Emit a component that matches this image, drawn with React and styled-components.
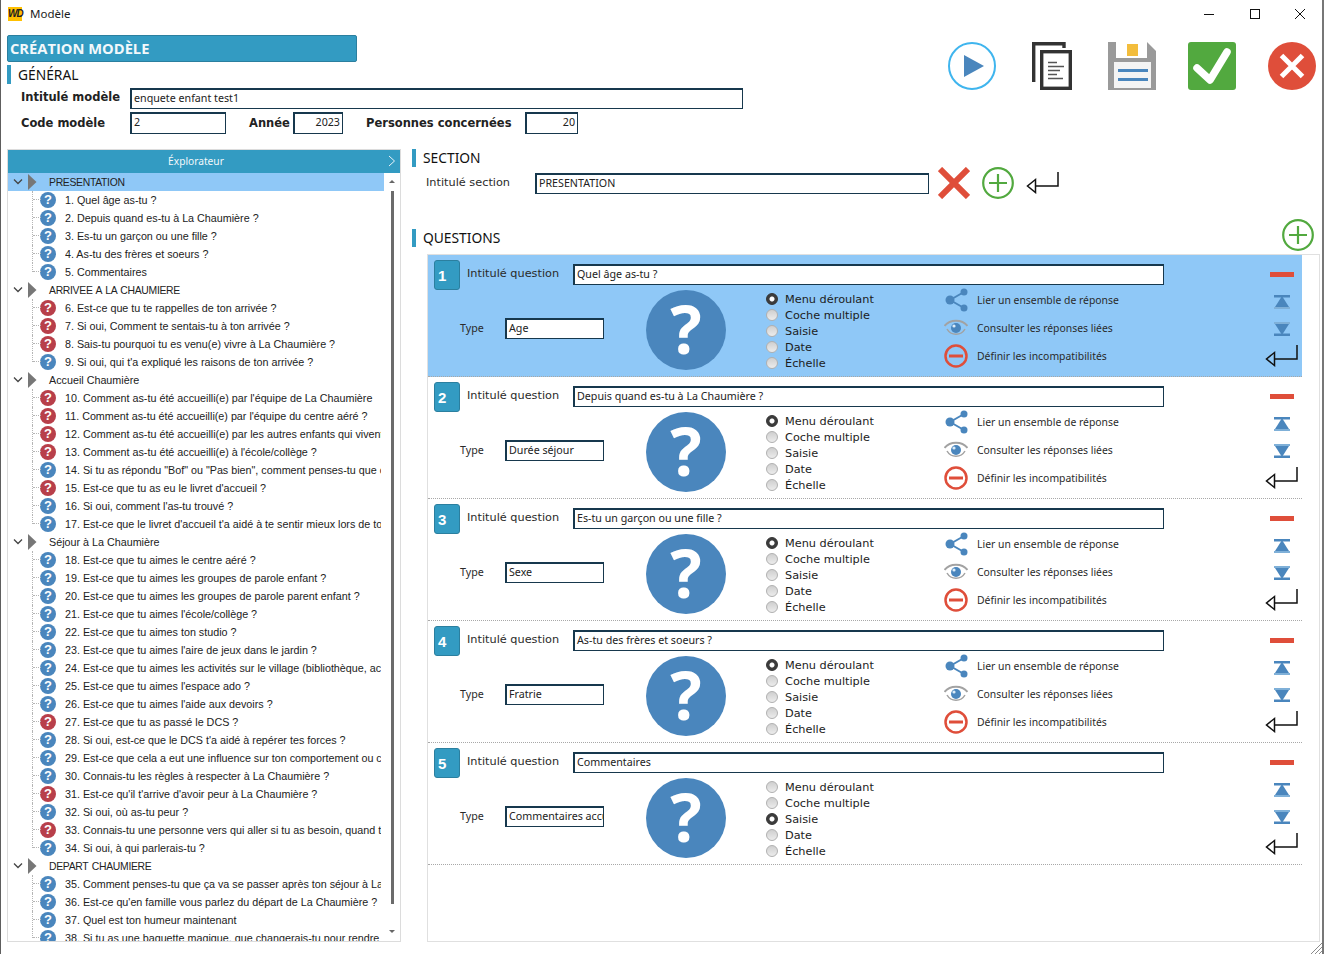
import React from 'react';
import styled, { createGlobalStyle } from 'styled-components';

const BLUE = '#339bc2';
const SKY = '#8fc8f7';
const STEEL = '#4a86bd';
const RED = '#df4e3a';
const GREEN = '#52a93f';
const LINE = '#17384d';

const GlobalStyle = createGlobalStyle`
  * { box-sizing: border-box; }
  html, body { margin: 0; padding: 0; background: #fff; }
  body { font-family: "Noto Sans", "Liberation Sans", sans-serif; color: #1c1c1c; }
`;

const Window = styled.div`
  position: relative;
  width: 1324px;
  height: 954px;
  overflow: hidden;
  background: #fff;
  border-left: 1px solid #5e5e5e;
  border-right: 2px solid #777;
`;

const TitleBar = styled.div`
  display: flex;
  align-items: center;
  height: 28px;
  padding-left: 7px;
`;

const AppLogo = styled.span`
  width: 14px;
  height: 14px;
  background: #ffc000;
  color: #222;
  font: italic bold 10px/14px "Liberation Sans", sans-serif;
  letter-spacing: -1px;
  text-align: center;
`;

const AppName = styled.span`
  margin: 0 0 2px 8px;
  font-size: 11.5px;
  flex: 1;
`;

const WinButton = styled.span`
  display: flex;
  align-items: center;
  justify-content: center;
  width: ${(p) => p.$w}px;
  height: 28px;
`;

const Header = styled.header`
  display: flex;
  justify-content: space-between;
  height: 121px;
`;

const General = styled.div`
  padding: 7px 0 0 6px;
`;

const Banner = styled.h1`
  width: 350px;
  height: 27px;
  margin: 0;
  padding-left: 2px;
  background: ${BLUE};
  border: 1px solid #2b7f9f;
  border-radius: 2px;
  color: #f2f8fb;
  font: bold 14.7px/25px "Open Sans", sans-serif;
`;

const SectionTitle = styled.h2`
  height: 18px;
  margin: 0;
  padding-left: 7px;
  border-left: 4px solid ${BLUE};
  font-weight: 400;
  font-size: 13.8px;
  line-height: 17px;
  color: #111;
`;

const GeneralHead = styled(SectionTitle)`
  height: 19px;
  margin-top: 3px;
  line-height: 20px;
`;

const FieldRow = styled.div`
  display: flex;
  align-items: center;
  height: ${(p) => p.$h}px;
  margin-top: ${(p) => p.$top}px;
`;

const BoldLabel = styled.label`
  width: ${(p) => p.$w}px;
  margin-left: ${(p) => p.$left || 0}px;
  margin-bottom: ${(p) => p.$lift || 0}px;
  font: bold 11.5px "DejaVu Sans", sans-serif;
  color: #222;
  white-space: nowrap;
`;

const Field = styled.div`
  width: ${(p) => p.$w}px;
  height: ${(p) => p.$h || 21}px;
  padding: 0 2px;
  flex: none;
  background: #fff;
  border: 1px solid ${LINE};
  border-top-width: 2px;
  border-left-width: 2px;
  font-size: 10.7px;
  line-height: 16px;
  color: #222;
  text-align: ${(p) => (p.$right ? 'right' : 'left')};
  white-space: nowrap;
  overflow: hidden;
`;

const Toolbar = styled.div`
  display: flex;
  gap: 32px;
  padding: 14px 6px 0 0;
  align-items: flex-start;
`;

const CopySlot = styled.span`
  display: flex;
  margin: 0 4px;
`;

const Main = styled.main`
  display: flex;
  align-items: flex-start;
  height: 793px;
  padding-left: 6px;
`;

const Explorer = styled.aside`
  width: 394px;
  height: 793px;
  display: flex;
  flex-direction: column;
  border: 1px solid #dcdcdc;
`;

const ExplorerHead = styled.div`
  position: relative;
  flex: none;
  height: 23px;
  padding-right: 16px;
  background: ${BLUE};
  color: #f2f8fb;
  font-size: 10.2px;
  line-height: 23px;
  text-align: center;
`;

const HeadChevron = styled.span`
  position: absolute;
  right: 4px;
  top: 5px;
  display: flex;
`;

const ExplorerBody = styled.div`
  flex: 1;
  display: flex;
  min-height: 0;
`;

const Tree = styled.div`
  width: 376px;
  overflow: hidden;
`;

const GroupRow = styled.div`
  display: flex;
  align-items: center;
  height: 18px;
  padding-left: 5px;
  background: ${(p) => (p.$selected ? SKY : 'transparent')};
  color: #222;
  white-space: nowrap;
`;

const GroupName = styled.span`
  margin-left: 12px;
  font: ${(p) => (p.$caps ? 10.4 : 10.75)}px "Liberation Sans", sans-serif;
  letter-spacing: ${(p) => (p.$caps ? -0.3 : 0)}px;
  word-spacing: ${(p) => (p.$caps ? 1 : 0)}px;
`;

const QuestionRow = styled.div`
  display: flex;
  align-items: center;
  height: 18px;
  padding-right: 3px;
  font: 10.75px "Liberation Sans", sans-serif;
  color: #222;
`;

const Connector = styled.span`
  position: relative;
  flex: none;
  align-self: flex-start;
  width: 8px;
  height: ${(p) => (p.$last ? 9 : 18)}px;
  margin-left: 24px;
  border-left: 1px dotted #b5b5b5;
  &::after {
    content: '';
    position: absolute;
    left: 0;
    top: 8px;
    width: 8px;
    border-top: 1px dotted #b5b5b5;
  }
`;

const QuestionMark = styled.span`
  flex: none;
  width: 16px;
  height: 16px;
  border-radius: 50%;
  background: ${(p) => (p.$red ? '#b83f4a' : STEEL)};
  color: #fff;
  font: bold 13px/16px "Liberation Sans", sans-serif;
  text-align: center;
`;

const QuestionText = styled.span`
  flex: 1;
  min-width: 0;
  margin-left: 9px;
  overflow: hidden;
  white-space: nowrap;
`;

const ScrollTrack = styled.div`
  flex: 1;
  display: flex;
  flex-direction: column;
  align-items: center;
`;

const ScrollArrow = styled.span`
  flex: none;
  width: 0;
  height: 0;
  margin-top: ${(p) => p.$top}px;
  border-left: 3px solid transparent;
  border-right: 3px solid transparent;
  border-${(p) => (p.$down ? 'top' : 'bottom')}: 3px solid #666;
`;

const ScrollThumb = styled.span`
  flex: none;
  width: 3px;
  height: 713px;
  margin-top: 8px;
  background: #6b6b6b;
`;

const Editor = styled.section`
  width: 908px;
  margin-left: 11px;
  display: flex;
  flex-direction: column;
  height: 793px;
`;

const SectionRow = styled.div`
  display: flex;
  align-items: center;
  height: 32px;
`;

const PlainLabel = styled.label`
  font: 11.3px "DejaVu Sans", sans-serif;
  color: #2a2a2a;
  white-space: nowrap;
`;

const SectionLabel = styled(PlainLabel)`
  width: 109px;
  margin: 0 0 2px 14px;
`;

const SectionTools = styled.div`
  display: flex;
  align-items: center;
  gap: 12px;
  margin-left: 9px;
`;

const QuestionsHead = styled.div`
  display: flex;
  justify-content: space-between;
  flex: none;
  height: 35px;
  margin-top: 20px;
  padding-right: 6px;
`;

const QuestionsTitle = styled(SectionTitle)`
  margin-top: 10px;
`;

const QuestionList = styled.div`
  flex: 1;
  margin-left: 15px;
  border: 1px solid #e0e0e0;
`;

const Card = styled.article`
  width: 874px;
  height: 122px;
  background: ${(p) => (p.$active ? SKY : '#fff')};
  border-bottom: 1px dotted #a8a8a8;
`;

const CardTop = styled.div`
  display: flex;
  align-items: flex-start;
  height: 33px;
  padding-left: 6px;
`;

const Badge = styled.span`
  flex: none;
  width: 26px;
  height: 30px;
  margin-top: 5px;
  padding-left: 3px;
  background: ${BLUE};
  border: 1px solid #2b7f9f;
  border-radius: 3px;
  color: #fff;
  font: bold 15px/29px "Liberation Sans", sans-serif;
`;

const QuestionLabel = styled(PlainLabel)`
  width: 106px;
  margin: 10px 0 0 7px;
  line-height: 18px;
`;

const TitleField = styled(Field)`
  margin-top: 9px;
`;

const RemoveBar = styled.span`
  flex: none;
  width: 24px;
  height: 5px;
  margin: 17px 0 0 106px;
  background: ${RED};
`;

const CardBottom = styled.div`
  display: flex;
  align-items: flex-start;
  padding-left: 32px;
`;

const TypeGroup = styled.div`
  display: flex;
  align-items: center;
  width: 186px;
  margin-top: 30px;
`;

const TypeLabel = styled.label`
  width: 45px;
  margin-bottom: 2px;
  font-size: 10.7px;
  color: #2a2a2a;
`;

const BigMark = styled.span`
  flex: none;
  width: 80px;
  height: 80px;
  margin-top: 2px;
  border-radius: 50%;
  background: ${STEEL};
  color: #fff;
  font: bold 66px/76px "Open Sans", sans-serif;
  text-align: center;
`;

const RadioColumn = styled.div`
  flex: none;
  width: 178px;
  margin: 3px 0 0 40px;
`;

const RadioRow = styled.div`
  display: flex;
  align-items: center;
  height: 16px;
  font: 11.3px "DejaVu Sans", sans-serif;
  color: #1c1c1c;
`;

const RadioDot = styled.span`
  flex: none;
  width: 12px;
  height: 12px;
  margin-right: 7px;
  border-radius: 50%;
  background: ${(p) => (p.$on ? 'radial-gradient(circle, #fff 0 2px, #3c3c3c 3px)' : 'linear-gradient(#cfcfcf, #ececec)')};
  border: 1px solid ${(p) => (p.$on ? '#333' : '#b0b0b0')};
`;

const ActionColumn = styled.div`
  flex: none;
  width: 321px;
  display: flex;
  flex-direction: column;
  gap: 4px;
`;

const ActionRow = styled.div`
  display: flex;
  align-items: center;
  height: 24px;
  font-size: 10.4px;
  color: #2a2a2a;
  white-space: nowrap;
`;

const ActionIcon = styled.span`
  display: flex;
  justify-content: center;
  width: 24px;
  margin-right: 9px;
`;

const MoveColumn = styled.div`
  flex: none;
  width: 33px;
  display: flex;
  flex-direction: column;
  align-items: center;
  padding-top: 7px;
`;

const MoveDownIcon = styled.span`
  display: flex;
  margin: 13px 0 9px;
`;

const Grip = styled.svg`
  position: absolute;
  right: 0;
  bottom: 0;
`;

const PlayIcon = () => (
  <svg width="48" height="48" viewBox="0 0 48 48">
    <circle cx="24" cy="24" r="23" fill="#fff" stroke="#3fb5ee" strokeWidth="2" />
    <path d="M16 13 36 24 16 35z" fill={STEEL} />
  </svg>
);

const CopyIcon = () => (
  <svg width="40" height="48" viewBox="0 0 40 48">
    <path d="M1.700 40V1.700H32V6" fill="none" stroke="#333" strokeWidth="3.400" />
    <rect x="9.700" y="9.700" width="28.600" height="36.600" fill="#fff" stroke="#333" strokeWidth="3.400" />
    <path d="M16 20.500h9M16 24.500h16M16 28.500h12M16 32.500h9M16 36.500h15" stroke="#555" strokeWidth="1.500" />
  </svg>
);

const SaveIcon = () => (
  <svg width="48" height="48" viewBox="0 0 48 48">
    <path d="M0 0H39L48 9V48H0z" fill="#9a9a9a" />
    <path d="M8 0H39V16H8z" fill="#fff" />
    <rect x="19" y="2" width="11" height="12" fill="#f3bd3c" />
    <rect x="6" y="20" width="37" height="26" fill="#f4f4f4" />
    <rect x="10" y="27" width="30" height="3" fill={STEEL} />
    <rect x="10" y="36" width="30" height="3" fill={STEEL} />
  </svg>
);

const CheckIcon = () => (
  <svg width="48" height="48" viewBox="0 0 48 48">
    <rect width="48" height="48" rx="3" fill={GREEN} />
    <path d="M9 26 22 38 39 10" fill="none" stroke="#fff" strokeWidth="7.500" strokeLinecap="round" strokeLinejoin="round" />
  </svg>
);

const CloseIcon = () => (
  <svg width="48" height="48" viewBox="0 0 48 48">
    <circle cx="24" cy="24" r="24" fill={RED} />
    <path d="M13.500 13.500 34.500 34.500M34.500 13.500 13.500 34.500" stroke="#fff" strokeWidth="5" />
  </svg>
);

const MinIcon = () => (
  <svg width="10" height="10" viewBox="0 0 10 10"><path d="M0 5.500h10" stroke="#111" /></svg>
);
const MaxIcon = () => (
  <svg width="10" height="10" viewBox="0 0 10 10"><rect x=".5" y=".5" width="9" height="9" fill="none" stroke="#111" /></svg>
);
const ShutIcon = () => (
  <svg width="10" height="10" viewBox="0 0 10 10"><path d="M0 0 10 10M10 0 0 10" stroke="#111" /></svg>
);

const BigX = () => (
  <svg width="32" height="32" viewBox="0 0 32 32">
    <path d="M2 2 30 30M30 2 2 30" stroke={RED} strokeWidth="6" />
  </svg>
);

const PlusIcon = () => (
  <svg width="32" height="32" viewBox="0 0 32 32">
    <circle cx="16" cy="16" r="14.800" fill="none" stroke={GREEN} strokeWidth="2.200" />
    <path d="M16 7V25M7 16H25" stroke={GREEN} strokeWidth="2.200" />
  </svg>
);

const ReturnIcon = () => (
  <svg width="33" height="22" viewBox="0 0 33 22">
    <path d="M32 0V14H9.500M9.500 7.500 1.500 14 9.500 20.500z" fill="none" stroke="#111" strokeWidth="1.500" />
  </svg>
);

const ShareIcon = () => (
  <svg width="24" height="24" viewBox="0 0 24 24">
    <path d="M6 12 20 4M6 12 20 20" stroke={STEEL} strokeWidth="2" />
    <circle cx="6" cy="12" r="4.500" fill={STEEL} />
    <circle cx="20" cy="4" r="3.500" fill={STEEL} />
    <circle cx="20" cy="20" r="3.500" fill={STEEL} />
  </svg>
);

const EyeIcon = () => (
  <svg width="24" height="24" viewBox="0 0 24 24">
    <path d="M0.500 10C6 3 18 3 23.500 10" fill="none" stroke="#a2a2a2" strokeWidth="2" />
    <path d="M3 13C7 20 17 20 21 13" fill="none" stroke="#a2a2a2" strokeWidth="1.500" />
    <circle cx="12" cy="12" r="5" fill={STEEL} />
    <circle cx="10" cy="10" r="1.600" fill="#dcecf8" />
  </svg>
);

const ForbidIcon = () => (
  <svg width="24" height="24" viewBox="0 0 24 24">
    <circle cx="12" cy="12" r="10.500" fill="none" stroke={RED} strokeWidth="2.500" />
    <rect x="5" y="10.500" width="14" height="3" fill={RED} />
  </svg>
);

const UpIcon = () => (
  <svg width="16" height="14" viewBox="0 0 16 14">
    <rect width="16" height="2.500" fill={STEEL} />
    <path d="M8 1 15 12H1z" fill={STEEL} />
    <rect y="12" width="16" height="2" fill="#7fb0d8" />
  </svg>
);

const DownIcon = () => (
  <svg width="16" height="14" viewBox="0 0 16 14">
    <rect width="16" height="2" fill="#7fb0d8" />
    <path d="M8 13 15 2H1z" fill={STEEL} />
    <rect y="11.500" width="16" height="2.500" fill={STEEL} />
  </svg>
);

const groups = [
  { name: 'PRESENTATION', selected: true, items: [
    ['1. Quel âge as-tu ?'],
    ['2. Depuis quand es-tu à La Chaumière ?'],
    ['3. Es-tu un garçon ou une fille ?'],
    ['4. As-tu des frères et soeurs ?'],
    ['5. Commentaires'],
  ] },
  { name: 'ARRIVEE A LA CHAUMIERE', items: [
    ['6. Est-ce que tu te rappelles de ton arrivée ?', 1],
    ['7. Si oui, Comment te sentais-tu à ton arrivée ?', 1],
    ['8. Sais-tu pourquoi tu es venu(e) vivre à La Chaumière ?', 1],
    ['9. Si oui, qui t\'a expliqué les raisons de ton arrivée ?'],
  ] },
  { name: 'Accueil Chaumière', items: [
    ['10. Comment as-tu été accueilli(e) par l\'équipe de La Chaumière', 1],
    ['11. Comment as-tu été accueilli(e) par l\'équipe du centre aéré ?', 1],
    ['12. Comment as-tu été accueilli(e) par les autres enfants qui vivent', 1],
    ['13. Comment as-tu été accueilli(e) à l\'école/collège ?', 1],
    ['14. Si tu as répondu "Bof" ou "Pas bien", comment penses-tu que cela', 0],
    ['15. Est-ce que tu as eu le livret d\'accueil ?', 1],
    ['16. Si oui, comment l\'as-tu trouvé ?'],
    ['17. Est-ce que le livret d\'accueil t\'a aidé à te sentir mieux lors de ton'],
  ] },
  { name: 'Séjour à La Chaumière', items: [
    ['18. Est-ce que tu aimes le centre aéré ?'],
    ['19. Est-ce que tu aimes les groupes de parole enfant ?'],
    ['20. Est-ce que tu aimes les groupes de parole parent enfant ?'],
    ['21. Est-ce que tu aimes l\'école/collège ?'],
    ['22. Est-ce que tu aimes ton studio ?'],
    ['23. Est-ce que tu aimes l\'aire de jeux dans le jardin ?'],
    ['24. Est-ce que tu aimes les activités sur le village (bibliothèque, act'],
    ['25. Est-ce que tu aimes l\'espace ado ?'],
    ['26. Est-ce que tu aimes l\'aide aux devoirs ?'],
    ['27. Est-ce que tu as passé le DCS ?', 1],
    ['28. Si oui, est-ce que le DCS t\'a aidé à repérer tes forces ?'],
    ['29. Est-ce que cela a eut une influence sur ton comportement ou ce'],
    ['30. Connais-tu les règles à respecter à La Chaumière ?'],
    ['31. Est-ce qu\'il t\'arrive d\'avoir peur à La Chaumière ?', 1],
    ['32. Si oui, où as-tu peur ?'],
    ['33. Connais-tu une personne vers qui aller si tu as besoin, quand tu', 1],
    ['34. Si oui, à qui parlerais-tu ?'],
  ] },
  { name: 'DEPART CHAUMIERE', items: [
    ['35. Comment penses-tu que ça va se passer après ton séjour à La'],
    ['36. Est-ce qu\'en famille vous parlez du départ de La Chaumière ?'],
    ['37. Quel est ton humeur maintenant'],
    ['38. Si tu as une baguette magique, que changerais-tu pour rendre'],
  ] },
];

const questions = [
  { title: 'Quel âge as-tu ?', type: 'Age', mode: 0, linked: true },
  { title: 'Depuis quand es-tu à La Chaumière ?', type: 'Durée séjour', mode: 0, linked: true },
  { title: 'Es-tu un garçon ou une fille ?', type: 'Sexe', mode: 0, linked: true },
  { title: 'As-tu des frères et soeurs ?', type: 'Fratrie', mode: 0, linked: true },
  { title: 'Commentaires', type: 'Commentaires accueil', mode: 2, linked: false },
];

const modes = ['Menu déroulant', 'Coche multiple', 'Saisie', 'Date', 'Échelle'];

function TreeGroup({ group }) {
  return (
    <>
      <GroupRow $selected={group.selected}>
        <svg width="10" height="8" viewBox="0 0 10 8">
          <path d="M1 1.500 5 5.500 9 1.500" fill="none" stroke="#444" strokeWidth="1.300" />
        </svg>
        <svg width="9" height="16" viewBox="0 0 9 16" style={{ marginLeft: 5 }}>
          <path d="M0 0 8.500 8 0 16z" fill="#777" />
        </svg>
        <GroupName $caps={group.name === group.name.toUpperCase()}>{group.name}</GroupName>
      </GroupRow>
      {group.items.map(([text, red], i) => (
        <QuestionRow key={text}>
          <Connector $last={i === group.items.length - 1} />
          <QuestionMark $red={red}>?</QuestionMark>
          <QuestionText>{text}</QuestionText>
        </QuestionRow>
      ))}
    </>
  );
}

function QuestionCard({ index, q }) {
  return (
    <Card $active={index === 0}>
      <CardTop>
        <Badge>{index + 1}</Badge>
        <QuestionLabel>Intitulé question</QuestionLabel>
        <TitleField $w={591}>{q.title}</TitleField>
        <RemoveBar />
      </CardTop>
      <CardBottom>
        <TypeGroup>
          <TypeLabel>Type</TypeLabel>
          <Field $w={99}>{q.type}</Field>
        </TypeGroup>
        <BigMark>?</BigMark>
        <RadioColumn>
          {modes.map((m, i) => (
            <RadioRow key={m}>
              <RadioDot $on={i === q.mode} />
              {m}
            </RadioRow>
          ))}
        </RadioColumn>
        <ActionColumn>
          {q.linked && (
            <>
              <ActionRow><ActionIcon><ShareIcon /></ActionIcon>Lier un ensemble de réponse</ActionRow>
              <ActionRow><ActionIcon><EyeIcon /></ActionIcon>Consulter les réponses liées</ActionRow>
              <ActionRow><ActionIcon><ForbidIcon /></ActionIcon>Définir les incompatibilités</ActionRow>
            </>
          )}
        </ActionColumn>
        <MoveColumn>
          <UpIcon />
          <MoveDownIcon><DownIcon /></MoveDownIcon>
          <ReturnIcon />
        </MoveColumn>
      </CardBottom>
    </Card>
  );
}

export default function App() {
  return (
    <Window>
      <GlobalStyle />
      <TitleBar>
        <AppLogo>WD</AppLogo>
        <AppName>Modèle</AppName>
        <WinButton $w={44}><MinIcon /></WinButton>
        <WinButton $w={47}><MaxIcon /></WinButton>
        <WinButton $w={44}><ShutIcon /></WinButton>
      </TitleBar>
      <Header>
        <General>
          <Banner>CRÉATION MODÈLE</Banner>
          <GeneralHead>GÉNÉRAL</GeneralHead>
          <FieldRow $h={21} $top={4}>
            <BoldLabel $w={109} $left={14} $lift={3}>Intitulé modèle</BoldLabel>
            <Field $w={613}>enquete enfant test1</Field>
          </FieldRow>
          <FieldRow $h={22} $top={3}>
            <BoldLabel $w={109} $left={14}>Code modèle</BoldLabel>
            <Field $w={96} $h={22}>2</Field>
            <BoldLabel $w={44} $left={23}>Année</BoldLabel>
            <Field $w={50} $h={22} $right>2023</Field>
            <BoldLabel $w={159} $left={23}>Personnes concernées</BoldLabel>
            <Field $w={53} $h={22} $right>20</Field>
          </FieldRow>
        </General>
        <Toolbar>
          <PlayIcon />
          <CopySlot><CopyIcon /></CopySlot>
          <SaveIcon />
          <CheckIcon />
          <CloseIcon />
        </Toolbar>
      </Header>
      <Main>
        <Explorer>
          <ExplorerHead>
            Éxplorateur
            <HeadChevron>
              <svg width="8" height="12" viewBox="0 0 8 12">
                <path d="M1 1 6.500 6 1 11" fill="none" stroke="#e8f4fa" />
              </svg>
            </HeadChevron>
          </ExplorerHead>
          <ExplorerBody>
            <Tree>
              {groups.map((g) => <TreeGroup key={g.name} group={g} />)}
            </Tree>
            <ScrollTrack>
              <ScrollArrow $top={7} />
              <ScrollThumb />
              <ScrollArrow $down $top={26} />
            </ScrollTrack>
          </ExplorerBody>
        </Explorer>
        <Editor>
          <SectionTitle>SECTION</SectionTitle>
          <SectionRow>
            <SectionLabel>Intitulé section</SectionLabel>
            <Field $w={394}>PRESENTATION</Field>
            <SectionTools>
              <BigX />
              <PlusIcon />
              <ReturnIcon />
            </SectionTools>
          </SectionRow>
          <QuestionsHead>
            <QuestionsTitle>QUESTIONS</QuestionsTitle>
            <PlusIcon />
          </QuestionsHead>
          <QuestionList>
            {questions.map((q, i) => <QuestionCard key={q.title} index={i} q={q} />)}
          </QuestionList>
        </Editor>
      </Main>
      <Grip width="11" height="11" viewBox="0 0 11 11">
        <path d="M11 0 0 11M11 4 4 11M11 8 8 11" stroke="#8a8a8a" />
      </Grip>
    </Window>
  );
}
